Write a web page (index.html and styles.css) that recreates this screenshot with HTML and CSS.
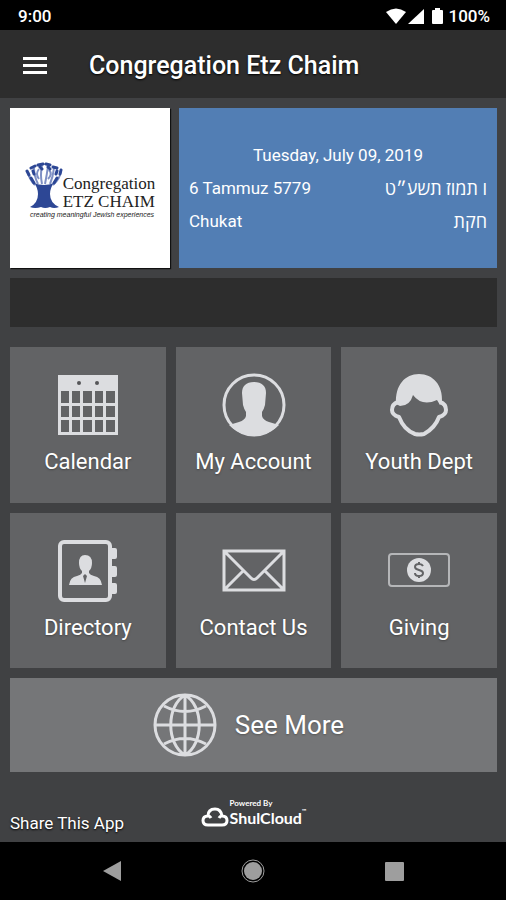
FILE: index.html
```html
<!DOCTYPE html>
<html lang="en">
<head>
<meta charset="utf-8">
<meta name="viewport" content="width=device-width, initial-scale=1">
<title>Congregation Etz Chaim</title>
<link rel="stylesheet" href="styles.css">
</head>
<body>
<div class="status">
  <span>9:00</span>
  <span class="status-right">
    <svg width="58" height="20" viewBox="0 0 58 20" fill="#fff" aria-hidden="true">
      <path d="M0 6Q10 -1 20 6L10 18Z"/>
      <path d="M38 3V18H22Z"/>
      <path d="M49 2h5v2h2q1 0 1 1v12q0 1-1 1h-9q-1 0-1-1V5q0-1 1-1h2z"/>
    </svg>
    <span>100%</span>
  </span>
</div>
<header class="bar">
  <button class="menu" type="button" aria-label="Menu">
    <svg width="24" height="18" viewBox="0 0 24 18" fill="#fff"><path d="M0 0h24v3H0zM0 7h24v3H0zM0 14h24v3H0z"/></svg>
  </button>
  <h1>Congregation Etz Chaim</h1>
</header>
<main>
  <section class="top">
    <div class="brand">
      <div class="brand-row">
        <svg class="tree" width="38" height="47" viewBox="0 0 38 47" aria-hidden="true">
          <path fill="#2d4795" d="M9 21Q19 25 29 21Q25 26 25 32Q25 41 34 45Q29 47 25 45Q20 47 16 45Q10 47 5 45Q13 41 13 32Q13 26 9 21Z"/>
          <g fill="none" stroke="#7f90c4" stroke-width="2"><path d="M10 23Q4 17 3 10M13 22Q9 14 9 6M17 22Q15 13 17 3M20 22Q22 12 23 4M25 22Q28 15 29 6M28 23Q35 17 36 9M14 17Q10 12 14 7M23 17Q28 12 24 8"/></g>
          <g fill="none" stroke="#2d4795" stroke-width="3" stroke-linecap="round"><path d="M2 9l2 4M6 6l4-2M8 9l1 3M13 3l5-1M15 5l2 2M21 2l4 1M23 5l2 2M28 5l4 1M32 9l-1 3M36 8l-1 4M6 16l3 5M32 16l-3 5"/></g>
        </svg>
        <div class="brand-name"><span>Congregation</span><span>ETZ CHAIM</span></div>
      </div>
      <em>creating meaningful Jewish experiences</em>
    </div>
    <div class="dates">
      <p class="today">Tuesday, July 09, 2019</p>
      <p><span>6 Tammuz 5779</span><span lang="he" dir="rtl">ו תמוז תשע״ט</span></p>
      <p><span>Chukat</span><span lang="he" dir="rtl">חקת</span></p>
    </div>
  </section>
  <div class="notice"></div>
  <nav class="tiles">
    <a href="#calendar">
      <svg viewBox="0 0 64 64" aria-hidden="true"><path fill="#dcdde0" fill-rule="evenodd" d="M2 2h60v60H2zM5 18v12h8V18zm11 0v12h8V18zm11 0v12h9V18zm12 0v12h8V18zm11 0v12h9V18zM5 33v11h8V33zm11 0v11h8V33zm11 0v11h9V33zm12 0v11h8V33zm11 0v11h9V33zM5 47v12h8V47zm11 0v12h8V47zm11 0v12h9V47zm12 0v12h8V47zm11 0v12h9V47z"/><circle cx="23" cy="10" r="2" fill="#555658"/><circle cx="41" cy="10" r="2" fill="#555658"/></svg>
      <span>Calendar</span>
    </a>
    <a href="#account">
      <svg viewBox="0 0 64 64" aria-hidden="true"><circle cx="32" cy="32" r="30" fill="none" stroke="#dcdde0" stroke-width="3"/><path fill="#dcdde0" d="M32 9C40 9 44 13 44 20L43 32Q42 36 40 39V43Q41 47 47 49L57 52Q48 62 32 62T7 52L17 49Q23 47 24 43V39Q22 36 21 32L20 20C20 13 24 9 32 9Z"/></svg>
      <span>My Account</span>
    </a>
    <a href="#youth">
      <svg viewBox="0 0 64 64" aria-hidden="true"><path fill="none" stroke="#dcdde0" stroke-width="4" stroke-linejoin="round" d="M11 29Q5 31 5 37Q5 42 12 44Q17 57 28 61Q32 62 37 61Q48 55 52 44Q59 42 59 37Q59 31 53 29"/><path fill="#dcdde0" d="M9 31C8 12 18 1 32 1S56 12 55 29L53 32L50 27Q35 34 26 22Q23 33 13 33Z"/></svg>
      <span>Youth Dept</span>
    </a>
    <a href="#directory">
      <svg viewBox="0 0 64 64" aria-hidden="true"><rect x="4" y="3" width="50" height="58" rx="4" fill="none" stroke="#dcdde0" stroke-width="4"/><g fill="#dcdde0"><path d="M54 9h5q2 0 2 2v7q0 2-2 2h-5zM54 27h5q2 0 2 2v7q0 2-2 2h-5zM54 44h5q2 0 2 2v7q0 2-2 2h-5z"/><path d="M29 16q7 0 7 8 0 5-3 8v2q1 2 5 3 7 1 8 9H13q1-8 8-9 4-1 5-3v-2q-3-3-3-8 0-8 6-8z"/></g><path fill="#626365" d="M29 44l-2-7 2-2 2 2z"/></svg>
      <span>Directory</span>
    </a>
    <a href="#contact">
      <svg viewBox="0 0 64 64" fill="none" stroke="#dcdde0" stroke-width="3" aria-hidden="true"><path d="M2 12h60v39H2zM3 13L29 39Q32 42 35 39L61 13M3 50L21 32M61 50L43 32"/></svg>
      <span>Contact Us</span>
    </a>
    <a href="#giving">
      <svg viewBox="0 0 64 64" aria-hidden="true"><rect x="2" y="15" width="60" height="32" rx="3" fill="none" stroke="#b5b6b8" stroke-width="2"/><circle cx="32" cy="31" r="12" fill="#dcdde0"/><path fill="none" stroke="#626365" stroke-width="2" d="M36 27Q35 25 32 25Q28 25 28 28Q28 30 32 31Q36 32 36 34Q36 37 32 37Q28 37 28 34M32 23v2M32 37v2"/></svg>
      <span>Giving</span>
    </a>
  </nav>
  <a class="more" href="#more">
    <svg viewBox="0 0 64 64" fill="none" stroke="#dcdde0" stroke-width="3" aria-hidden="true"><circle cx="32" cy="32" r="30"/><path d="M2 32h60M32 2v60M32 2C13 13 13 51 32 62M32 2C51 13 51 51 32 62M11 13Q32 24 53 13M11 51Q32 40 53 51"/></svg>
    <span>See More</span>
  </a>
</main>
<footer>
  <a class="share" href="#share">Share This App</a>
  <div class="powered">
    <svg width="28" height="20" viewBox="0 0 28 20" fill="none" stroke="#fff" stroke-width="3" aria-hidden="true"><path d="M7 18Q2 18 2 13.500Q2 9 7 9Q7 2 14 2Q20 2 21 9Q26 9 26 13.500Q26 18 21 18ZM7 9Q9 9 10 11M21 9Q19 9 18 11"/></svg>
    <div class="powered-text"><small>Powered By</small><strong>ShulCloud<sup>™</sup></strong></div>
  </div>
</footer>
<div class="system">
  <button type="button" aria-label="Back"><svg width="24" height="24" viewBox="0 0 24 24"><path fill="#9e9e9e" d="M3 12L21 2v20z"/></svg></button>
  <button type="button" aria-label="Home"><svg width="24" height="24" viewBox="0 0 24 24"><circle cx="12" cy="12" r="11" fill="none" stroke="#9e9e9e"/><circle cx="12" cy="12" r="9" fill="#9e9e9e"/></svg></button>
  <button type="button" aria-label="Recent apps"><svg width="24" height="24" viewBox="0 0 24 24"><rect x="3" y="3" width="19" height="19" rx="1" fill="#9e9e9e"/></svg></button>
</div>
</body>
</html>
```
FILE: styles.css
```css
* { box-sizing: border-box; }
body {
  margin: 0;
  min-height: 100vh;
  display: flex;
  flex-direction: column;
  background: #404143;
  color: #fff;
  font-family: Roboto, "Open Sans", sans-serif;
}
a { color: inherit; text-decoration: none; }
button { background: none; border: 0; padding: 0; color: inherit; }
svg { display: block; flex: none; }
h1, p { margin: 0; font-weight: 400; }

.status {
  display: flex;
  justify-content: space-between;
  align-items: center;
  height: 30px;
  padding: 2px 16px 0 18px;
  background: #000;
  font-size: 17px;
  font-weight: 500;
}
.status-right { display: flex; align-items: center; gap: 4px; }

.bar {
  display: flex;
  align-items: center;
  gap: 42px;
  height: 68px;
  padding: 3px 23px 0;
  background: #2d2d2d;
}
.bar h1 {
  font-size: 25px;
  line-height: 32px;
  font-weight: 500;
  text-shadow: 0 1px 2px #000;
}

main {
  display: flex;
  flex-direction: column;
  gap: 10px;
  padding: 10px 9px 0 10px;
}
.top { display: flex; gap: 9px; }
.brand {
  width: 160px;
  height: 160px;
  display: flex;
  flex-direction: column;
  justify-content: center;
  align-items: center;
  padding-top: 4px;
  background: #fff;
  color: #222;
  box-shadow: 1px 1px 1px #111;
}
.brand-row { display: flex; align-items: flex-end; }
.tree { margin-bottom: 2px; }
.brand-name {
  display: flex;
  flex-direction: column;
  font: 17px/18px "Liberation Serif", serif;
}
.brand em { font: italic 7px/8px "Liberation Sans", sans-serif; padding-left: 4px; }
.dates {
  flex: 1;
  display: flex;
  flex-direction: column;
  justify-content: center;
  padding: 0 10px;
  background: #527eb4;
  font-size: 17px;
  line-height: 33px;
}
.dates p { display: flex; justify-content: space-between; }
.dates .today { justify-content: center; }
.dates [lang="he"] { font-size: 18px; }

.notice { height: 49px; background: #2d2d2d; }

.tiles {
  display: grid;
  grid-template-columns: repeat(3, 1fr);
  gap: 10px;
  margin-top: 10px;
}
.tiles a {
  aspect-ratio: 1;
  display: flex;
  flex-direction: column;
  align-items: center;
  justify-content: center;
  gap: 10px;
  background: #626365;
  font-size: 22px;
  line-height: 30px;
  text-shadow: 0 1px 2px #444;
}
.tiles svg, .more svg { width: 64px; height: 64px; }
.more {
  display: flex;
  align-items: center;
  justify-content: center;
  gap: 18px;
  height: 94px;
  padding-right: 10px;
  background: #757678;
  font-size: 26px;
  text-shadow: 0 1px 2px #555;
}

footer {
  flex: 1;
  display: grid;
  grid-template-columns: 1fr auto 1fr;
  align-items: end;
  padding: 0 9px 8px 10px;
}
.share { font-size: 17px; line-height: 22px; text-shadow: 0 1px 2px #000; }
.powered {
  display: flex;
  align-items: flex-end;
  gap: 1px;
  padding-bottom: 7px;
}
.powered-text { display: flex; flex-direction: column; font-family: Lato, sans-serif; }
.powered small { font-size: 8px; line-height: 9px; font-weight: 700; }
.powered strong { font-size: 16px; line-height: 19px; font-weight: 700; }
.powered sup { font-size: 6px; line-height: 6px; vertical-align: top; }

.system {
  display: flex;
  justify-content: space-around;
  align-items: center;
  height: 58px;
  padding: 0 42px;
  background: #000;
}
```
